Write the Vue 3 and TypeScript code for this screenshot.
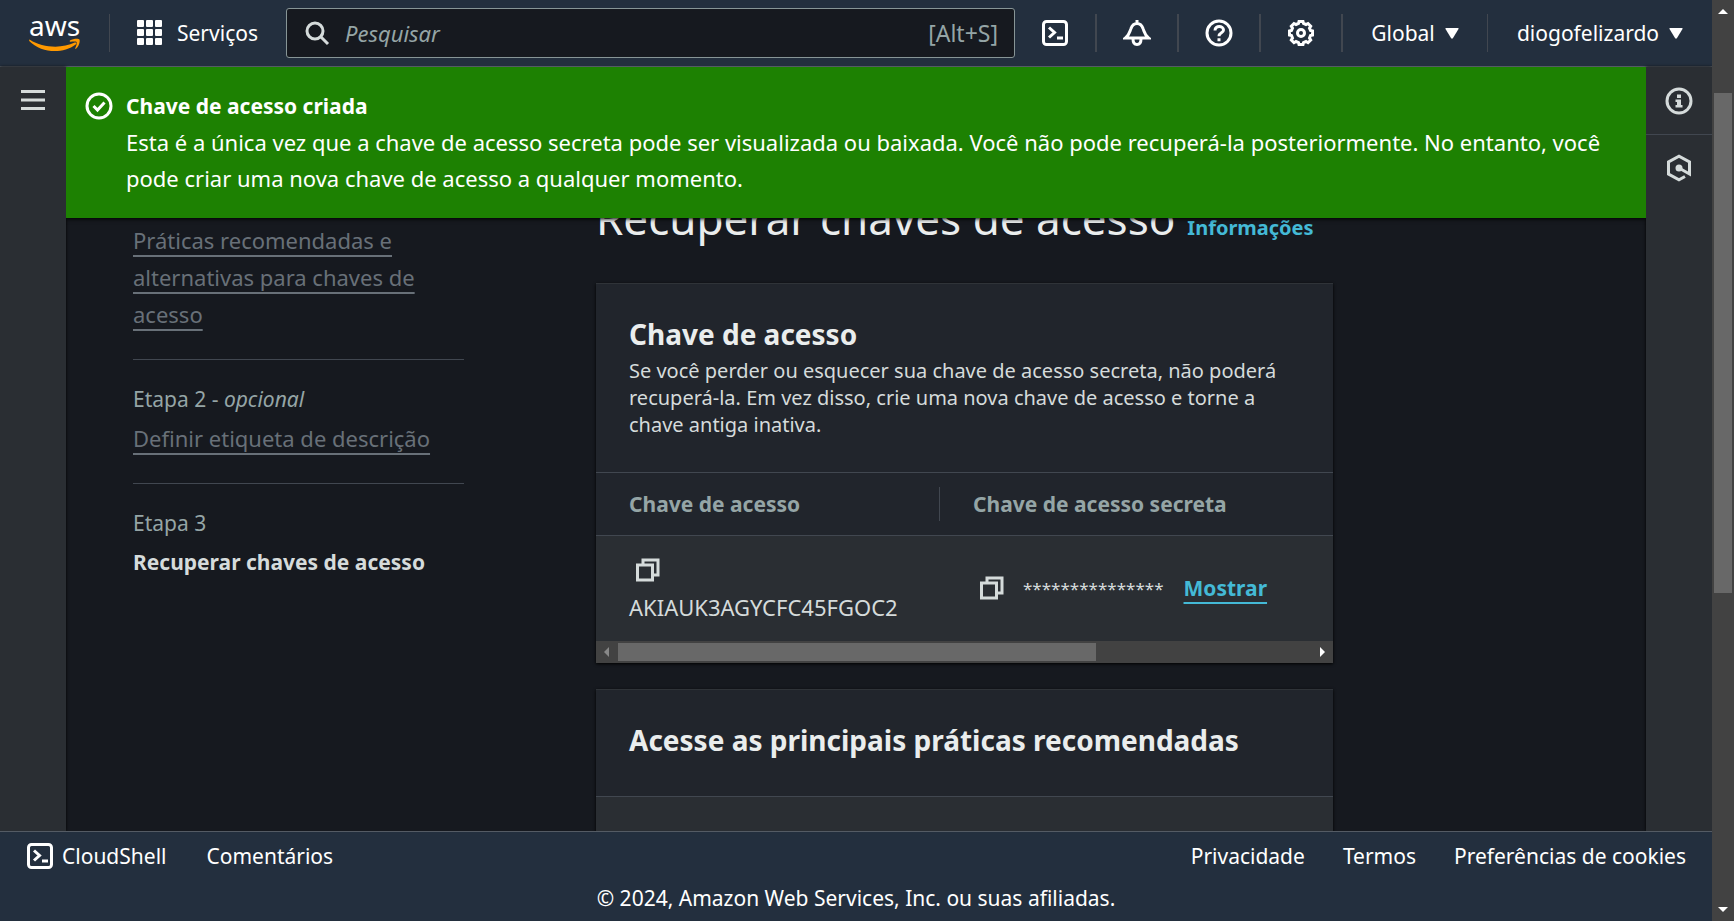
<script setup lang="ts">
import { ref } from 'vue'

const query = ref('')
const serviceDots = [2, 11, 20]
const columns = ['Chave de acesso', 'Chave de acesso secreta']
const accessKey = 'AKIAUK3AGYCFC45FGOC2'
const maskedSecret = '*'.repeat(15)
const legalLinks = ['Privacidade', 'Termos', 'Preferências de cookies']
</script>

<template>
  <div class="window">
    <div class="page">
      <header class="topbar">
        <a class="logo" href="#" aria-label="AWS">
          <span class="logo-text">aws</span>
          <svg class="smile" viewBox="0 0 54 14" aria-hidden="true">
            <path d="M1 1.500C14 10 34 11 47.500 4.500C49 3.800 50 5.200 48.500 6.400C35 16.500 13 15.500 .5 3C-.2 2 .2 1 1 1.500Z" />
            <path d="M42.500 2.200C46 .2 51.500 0 52.400 1.200C53.300 2.700 52 8.300 48.800 11C48.200 11.400 47.700 11 48 10.400C49 8 50.100 4.800 49.400 3.800C48.700 2.900 45.400 3.300 43.200 3.500C42.300 3.500 41.900 2.700 42.500 2.200Z" />
          </svg>
        </a>
        <button class="services" type="button">
          <svg class="icon" viewBox="0 0 28 28" aria-hidden="true">
            <template v-for="y in serviceDots" :key="y">
              <rect v-for="x in serviceDots" :key="x" class="solid" :x="x - 1" :y="y - 1" width="7" height="7" rx="1" />
            </template>
          </svg>
          Serviços
        </button>
        <label class="search">
          <svg class="icon search-icon" viewBox="0 0 28 28" aria-hidden="true">
            <circle cx="12" cy="12" r="8" />
            <path d="M18 18l7 7" />
          </svg>
          <input v-model="query" type="search" placeholder="Pesquisar" aria-label="Pesquisar" />
          <span class="hint">[Alt+S]</span>
        </label>
        <nav class="tools">
          <button type="button" aria-label="CloudShell">
            <svg class="icon" viewBox="0 0 28 28" aria-hidden="true">
              <rect x="2.500" y="2.500" width="23" height="23" rx="3" />
              <path d="M8 8.500l5.500 5L8 18.500M16 19h6" />
            </svg>
          </button>
          <button type="button" aria-label="Notificações">
            <svg class="icon" viewBox="0 0 28 28" aria-hidden="true">
              <path d="M2.500 19C6.500 16 6.500 13 8 9.500C9 6.500 11 4.500 14 4.500S19 6.500 20 9.500C21.500 13 21.500 16 25.500 19ZM14 1v3M10 20c0 3 1 5.500 4 5.500s4-2.500 4-5.500" />
            </svg>
          </button>
          <button type="button" aria-label="Ajuda">
            <svg class="icon" viewBox="0 0 28 28" aria-hidden="true">
              <circle cx="14" cy="14" r="12" />
              <path d="M10 11.500C10 6 18.500 6.500 18.500 11C18.500 14 14 13.500 14 17.200M14 19.200v3" />
            </svg>
          </button>
          <button type="button" aria-label="Configurações">
            <svg class="icon" viewBox="0 0 28 28" aria-hidden="true">
              <path d="M11.500 4.500L12 2.500h4l.5 2 2.500 1 2-1 2.700 2.700-1.200 2 1 2.300 2 .5v4l-2 .5-1 2.500 1.200 2-2.700 2.700-2-1.200-2.500 1-.5 2h-4l-.5-2-2.500-1-2 1.200L4.300 21l1.200-2-1-2.500-2-.5v-4l2-.5 1-2.300-1.200-2L7 4.500l2 1Z" />
              <circle cx="14" cy="14" r="3.500" />
            </svg>
          </button>
        </nav>
        <button class="menu region" type="button">
          Global
          <svg class="caret" viewBox="0 0 14 11" aria-hidden="true"><path d="M1 0h12q1 0 .5 1L8 10q-1 1.500-2 0L.5 1Q0 0 1 0Z" /></svg>
        </button>
        <button class="menu account" type="button">
          diogofelizardo
          <svg class="caret" viewBox="0 0 14 11" aria-hidden="true"><path d="M1 0h12q1 0 .5 1L8 10q-1 1.500-2 0L.5 1Q0 0 1 0Z" /></svg>
        </button>
      </header>

      <div class="body">
        <div class="rail">
          <button type="button" aria-label="Abrir navegação">
            <svg class="burger" viewBox="0 0 24 24" aria-hidden="true"><path d="M0 3.500h24M0 12h24M0 20.500h24" /></svg>
          </button>
        </div>

        <main class="main">
          <section class="flash" role="status">
            <svg class="icon" viewBox="0 0 28 28" aria-hidden="true">
              <circle cx="14" cy="14" r="12" />
              <path d="M8.500 14l4 4 7-7.500" />
            </svg>
            <div>
              <h2>Chave de acesso criada</h2>
              <p>Esta é a única vez que a chave de acesso secreta pode ser visualizada ou baixada. Você não pode recuperá-la posteriormente. No entanto, você pode criar uma nova chave de acesso a qualquer momento.</p>
            </div>
          </section>

          <div class="content">
            <ol class="steps">
              <li>
                <a href="#">Práticas recomendadas e alternativas para chaves de acesso</a>
              </li>
              <li>
                <span class="step-label">Etapa 2 - <em>opcional</em></span>
                <a href="#">Definir etiqueta de descrição</a>
              </li>
              <li>
                <span class="step-label">Etapa 3</span>
                <strong>Recuperar chaves de acesso</strong>
              </li>
            </ol>

            <div class="column">
              <div class="page-title">
                <h1>Recuperar chaves de acesso</h1>
                <a href="#">Informações</a>
              </div>

              <section class="card">
                <header class="card-head">
                  <h2>Chave de acesso</h2>
                  <p>Se você perder ou esquecer sua chave de acesso secreta, não poderá recuperá-la. Em vez disso, crie uma nova chave de acesso e torne a chave antiga inativa.</p>
                </header>
                <table>
                  <thead>
                    <tr>
                      <th v-for="name in columns" :key="name" scope="col"><span>{{ name }}</span></th>
                    </tr>
                  </thead>
                  <tbody>
                    <tr>
                      <td>
                        <button class="copy" type="button" aria-label="Copiar chave de acesso">
                          <svg viewBox="0 0 26 26" aria-hidden="true"><path d="M2.500 8h15v15h-15ZM8 8V3h15v15H18" /></svg>
                        </button>
                        <div>{{ accessKey }}</div>
                      </td>
                      <td>
                        <div class="secret">
                          <button class="copy" type="button" aria-label="Copiar chave de acesso secreta">
                            <svg viewBox="0 0 26 26" aria-hidden="true"><path d="M2.500 8h15v15h-15ZM8 8V3h15v15H18" /></svg>
                          </button>
                          <span class="stars">{{ maskedSecret }}</span>
                          <a href="#">Mostrar</a>
                        </div>
                      </td>
                    </tr>
                  </tbody>
                </table>
                <div class="hscroll" aria-hidden="true">
                  <svg class="dim" viewBox="0 0 22 22"><path d="M13 6v10l-5-5Z" /></svg>
                  <div class="track"><div class="thumb"></div></div>
                  <svg viewBox="0 0 22 22"><path d="M9 6v10l5-5Z" /></svg>
                </div>
              </section>

              <section class="card">
                <header class="card-head practices">
                  <h2>Acesse as principais práticas recomendadas</h2>
                </header>
                <div class="card-body"></div>
              </section>
            </div>
          </div>
        </main>

        <div class="rail tools-rail">
          <button type="button" aria-label="Informações">
            <svg class="icon" viewBox="0 0 28 28" aria-hidden="true">
              <circle cx="14" cy="14" r="12" />
              <path class="solid" d="M12 7.500h4v3.500h-4ZM10.500 12.500H16V18h1.500v2.500h-7V18H12v-3h-1.500Z" />
            </svg>
          </button>
          <button type="button" aria-label="Tutoriais">
            <svg class="icon" viewBox="0 0 28 28" aria-hidden="true">
              <path d="M20 22.500L14 25.800 3.500 20V8L14 2.200 24.500 8v12L14 14" />
              <circle class="solid" cx="14" cy="14" r="3.500" />
            </svg>
          </button>
        </div>
      </div>

      <footer class="footer">
        <div class="links">
          <a class="shell" href="#">
            <svg class="icon" viewBox="0 0 28 28" aria-hidden="true">
              <rect x="2.500" y="2.500" width="23" height="23" rx="3" />
              <path d="M8 8.500l5.500 5L8 18.500M16 19h6" />
            </svg>
            CloudShell
          </a>
          <a href="#">Comentários</a>
          <nav class="legal">
            <a v-for="link in legalLinks" :key="link" href="#">{{ link }}</a>
          </nav>
        </div>
        <p>© 2024, Amazon Web Services, Inc. ou suas afiliadas.</p>
      </footer>
    </div>

    <div class="vscroll" aria-hidden="true">
      <svg viewBox="0 0 22 22"><path d="M6 14h10l-5-5Z" /></svg>
      <div class="track"><div class="thumb"></div></div>
      <svg viewBox="0 0 22 22"><path d="M6 8h10l-5 5Z" /></svg>
    </div>
  </div>
</template>

<style>
body {
  background: #16191f;
}
</style>

<style scoped>
.window {
  display: grid;
  grid-template-columns: minmax(0, 1fr) 22px;
  height: 100vh;
  overflow: hidden;
  font: 22px/37px "Noto Sans", "Open Sans", sans-serif;
  color: #d5dbdb;
}
.window *,
.window {
  box-sizing: border-box;
}
h1, h2, p, ol {
  margin: 0;
  padding: 0;
}
button {
  padding: 0;
  border: 0;
  background: none;
  color: inherit;
  font: inherit;
  cursor: pointer;
}
a {
  color: inherit;
  text-decoration: none;
}
svg {
  display: block;
  flex: none;
  fill: none;
  stroke: currentColor;
  stroke-width: 3;
}
.icon {
  width: 28px;
  height: 28px;
}
.solid {
  fill: currentColor;
  stroke: none;
}
.page {
  display: grid;
  grid-template-rows: auto minmax(0, 1fr) auto;
  min-width: 0;
  min-height: 0;
}

/* Top navigation */
.topbar {
  display: flex;
  align-items: center;
  height: 67px;
  border-bottom: 1px solid #545b64;
  background: #232f3e;
  color: #fff;
  font-size: 21px;
  line-height: 30px;
}
.logo {
  display: flex;
  flex-direction: column;
  align-items: center;
  justify-content: center;
  width: 110px;
  height: 38px;
  border-right: 1px solid #414750;
}
.logo-text {
  font-size: 28px;
  line-height: 22px;
  padding-bottom: 2px;
}
.smile {
  width: 52px;
  height: 14px;
  fill: #f90;
  stroke: none;
}
.services {
  display: flex;
  align-items: center;
  gap: 13px;
  margin: 0 28px 0 26px;
}
.search {
  display: flex;
  flex: 1;
  align-items: center;
  gap: 14px;
  height: 50px;
  padding: 0 16px;
  border: 1px solid #879596;
  border-radius: 3px;
  background: #16191f;
  color: #95a5a6;
  font-size: 22px;
}
.search-icon {
  color: #d5dbdb;
}
.search input {
  flex: 1;
  min-width: 0;
  padding: 0;
  border: 0;
  outline: 0;
  background: none;
  color: #d5dbdb;
  font: inherit;
}
.search input::placeholder {
  color: #95a5a6;
  font-style: italic;
  opacity: 1;
}
.hint {
  font-size: 23px;
}
.tools {
  display: flex;
}
.tools button {
  display: grid;
  place-items: center;
  width: 82px;
  height: 38px;
  border-right: 2px solid #414750;
}
.menu {
  display: flex;
  align-items: center;
  justify-content: center;
  gap: 10px;
  height: 38px;
}
.region {
  width: 145px;
  border-right: 1px solid #414750;
}
.account {
  width: 224px;
}
.caret {
  width: 14px;
  height: 11px;
  fill: currentColor;
  stroke: none;
}

/* Body */
.body {
  display: grid;
  grid-template-columns: 66px minmax(0, 1fr) 66px;
  min-height: 0;
  background: #16191f;
}
.rail {
  background: #2a2e33;
  box-shadow: 0 0 3px #000;
}
.rail button {
  display: grid;
  place-items: center;
  width: 100%;
  height: 66px;
}
.burger {
  width: 24px;
  height: 24px;
}
.tools-rail button:first-child {
  height: 68px;
  border-bottom: 1px solid #414750;
}
.main {
  position: relative;
  min-height: 0;
  overflow: hidden;
}
.flash {
  position: absolute;
  z-index: 1;
  inset: 0 0 auto;
  display: flex;
  gap: 13px;
  padding: 21px 20px 22px 19px;
  background: #1d8102;
  box-shadow: 0 1px 4px #000;
  color: #fff;
  line-height: 36px;
}
.flash .icon {
  margin-top: 4px;
}
.flash h2 {
  font-size: 21px;
}
.content {
  display: grid;
  grid-template-columns: 331px minmax(0, 737px);
  gap: 132px;
  padding: 121px 66px 0 67px;
}

/* Wizard steps */
.steps {
  padding-top: 34px;
  list-style: none;
}
.steps li {
  display: grid;
  gap: 2px;
  justify-items: start;
  padding: 21px 0 26px;
  border-bottom: 1px solid #414750;
}
.steps li:first-child {
  padding-top: 0;
}
.steps li:last-child {
  border: 0;
}
.steps a {
  color: #687078;
  text-decoration: underline 2px;
  text-underline-offset: 6px;
}
.step-label {
  color: #95a5a6;
  font-size: 21px;
}
.steps strong {
  font-size: 21px;
}

/* Main column */
.page-title {
  display: flex;
  align-items: baseline;
  gap: 12px;
  margin-bottom: 35px;
}
.page-title h1 {
  color: #eaeded;
  font-size: 44px;
  font-weight: 400;
  line-height: 60px;
}
.page-title a {
  color: #44b9d6;
  font-size: 20px;
  font-weight: 700;
}
.card {
  margin-bottom: 26px;
  border-top: 1px solid #2f3338;
  background: #2a2e33;
  box-shadow: 0 1px 3px #000;
}
.card-head {
  padding: 29px 33px 34px;
  border-bottom: 1px solid #414750;
  background: #21252c;
  font-size: 20px;
  line-height: 27px;
}
.card-head h2 {
  padding-bottom: 2px;
  color: #eaeded;
  font-size: 28px;
  line-height: 42px;
}
table {
  width: 100%;
  border-collapse: collapse;
  table-layout: fixed;
}
th {
  padding: 14px 0;
  border-bottom: 1px solid #414750;
  background: #21252c;
  color: #95a5a6;
  font-size: 21px;
  line-height: 34px;
  text-align: left;
}
th:first-child {
  width: 344px;
}
th span {
  display: block;
  padding-left: 33px;
}
th:first-child span {
  border-right: 1px solid #414750;
}
td {
  padding: 14px 0 15px 33px;
}
.copy {
  display: grid;
  place-items: center;
  width: 38px;
  height: 39px;
}
.copy svg {
  width: 26px;
  height: 26px;
}
.secret {
  display: flex;
  align-items: center;
  gap: 12px;
}
.stars {
  font-size: 17px;
}
.secret a {
  margin-left: 8px;
  color: #44b9d6;
  font-size: 21px;
  font-weight: 700;
  text-decoration: underline 2px;
  text-underline-offset: 6px;
}
.practices {
  padding-bottom: 33px;
}
.card-body {
  height: 120px;
}

/* Scroll bars */
.hscroll {
  display: grid;
  grid-template-columns: 22px minmax(0, 1fr) 22px;
  height: 22px;
  background: #424242;
}
.hscroll svg,
.vscroll svg {
  width: 22px;
  height: 22px;
  fill: #fff;
  stroke: none;
}
.hscroll .dim {
  fill: #888;
}
.hscroll .track {
  padding: 2px 0;
}
.hscroll .thumb {
  width: 69%;
  height: 100%;
  background: #686868;
}
.vscroll {
  display: grid;
  grid-template-rows: 22px minmax(0, 1fr) 22px;
  background: #424242;
}
.vscroll .track {
  display: grid;
  grid-template-rows: 71fr 500fr 306fr;
  padding: 0 2px;
}
.vscroll .thumb {
  grid-row: 2;
  background: #686868;
}

/* Footer */
.footer {
  padding: 6px 26px 5px;
  border-top: 1px solid #545b64;
  background: #232f3e;
  color: #fff;
  font-size: 21px;
  line-height: 36px;
  text-align: center;
}
.links {
  display: flex;
  align-items: center;
  gap: 40px;
  margin-bottom: 6px;
}
.shell {
  display: flex;
  align-items: center;
  gap: 8px;
}
.legal {
  display: flex;
  gap: 38px;
  margin-left: auto;
}
</style>
